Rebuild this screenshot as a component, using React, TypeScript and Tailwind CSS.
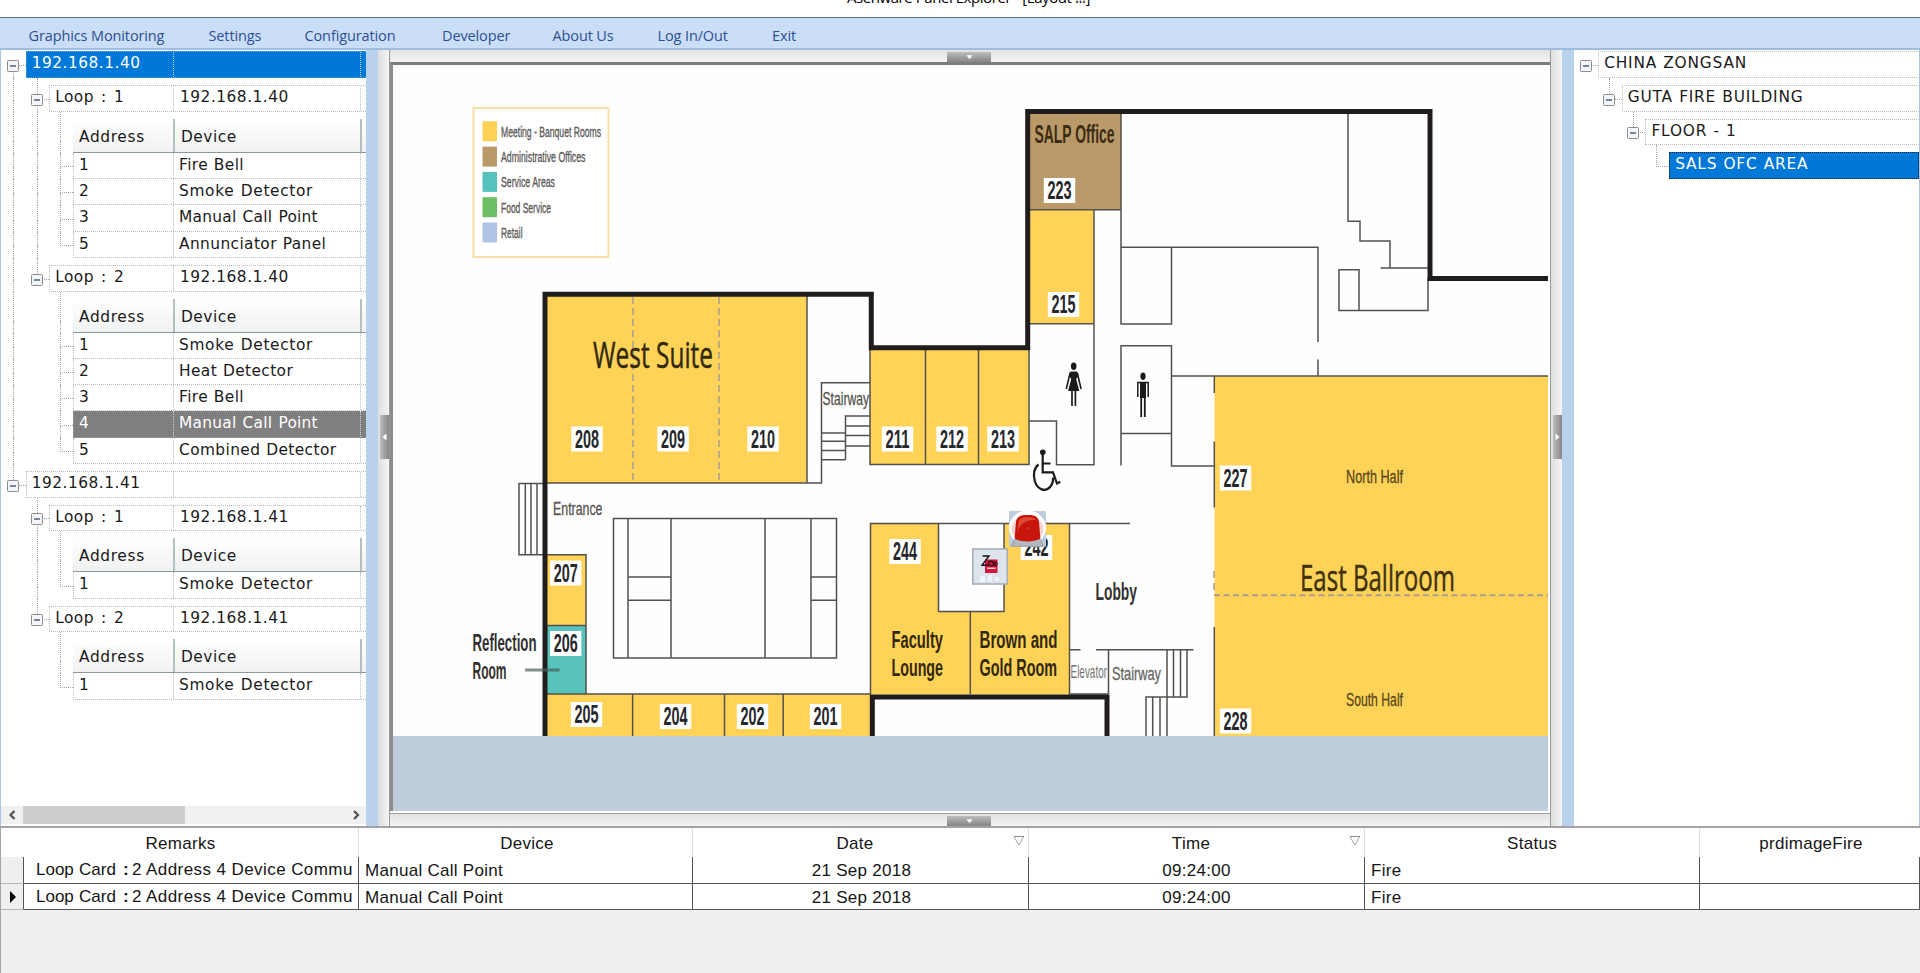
import React from "react";

type GuideKind = "none" | "line" | "tee" | "end" | "box" | "boxDown" | "boxUp" | "boxRoot";

const dot = "border-dotted border-[#a4a4a4]";

function Guide({ kind }: { kind: GuideKind }) {
  const isBox = kind.startsWith("box");
  const up = kind === "line" || kind === "tee" || kind === "end" || kind === "box" || kind === "boxUp";
  const down = kind === "line" || kind === "tee" || kind === "box" || kind === "boxDown";
  const stub = kind !== "none" && kind !== "line";
  return (
    <div className="relative flex w-[23.67px] shrink-0 flex-col self-stretch pl-[11px]">
      <div className={`${dot} flex-1 ${up ? "border-l" : ""} ${stub ? "border-b" : ""}`} />
      <div className={`${dot} h-3 ${down ? "border-l" : ""}`} />
      {isBox && (
        <svg className="absolute bottom-[6px] left-[5px]" width="12" height="12" viewBox="0 0 12 12">
          <rect x="0.5" y="0.5" width="11" height="11" rx="1" fill="#f4f5f6" stroke="#8b8d90" />
          <path d="M3 6H9" stroke="#3f5680" strokeWidth="1.4" />
        </svg>
      )}
    </div>
  );
}

const spacing: Record<string, string> = {
  "192.168.1.40": "tracking-[0.5px]",
  "192.168.1.41": "tracking-[0.5px]",
  "Loop : 1": "tracking-[0.4px] [word-spacing:2px]",
  "Loop : 2": "tracking-[0.4px] [word-spacing:2px]",
  "Smoke Detector": "tracking-[0.65px] [word-spacing:1px]",
  "Manual Call Point": "tracking-[0.25px] [word-spacing:1px]",
};

function spacingFor(text: string) {
  return spacing[text] ?? "tracking-[0.4px] [word-spacing:0.5px]";
}

type RowProps = {
  guides: GuideKind[];
  label: string;
  value?: string;
  gap?: boolean;
  item?: boolean;
  tone?: "plain" | "blue" | "gray";
};

function Row({ guides, label, value = "", gap = false, item = false, tone = "plain" }: RowProps) {
  const fill =
    tone === "blue"
      ? "bg-[#0078d7] text-white border-[#5aa0dd]"
      : tone === "gray"
        ? "bg-[#808080] text-white border-[#a0a0a0]"
        : "border-[#bdbdbd]";
  const inner = tone === "plain" ? "border-[#bdbdbd]" : "border-[#c8d4e0]";
  return (
    <div className={`flex ${gap ? "h-[33.7px]" : item ? "h-[26.3px]" : "h-[26.7px]"}`}>
      {guides.map((g, i) => (
        <Guide key={i} kind={g} />
      ))}
      <div className={`flex min-w-0 flex-1 ${gap ? "pt-[7px]" : ""}`}>
        <div
          className={`flex min-w-0 flex-1 border-b border-l border-dotted ${item ? "" : "border-t"} ${fill}`}
        >
          <div
            className={`min-w-0 flex-1 pl-[5px] ${spacingFor(label)} ${item ? "leading-[24px]" : "leading-[23px]"}`}
          >
            {label}
          </div>
          <div
            className={`w-[188px] border-x border-dotted ${inner} ${spacingFor(value)} ${item ? "pl-[5px] leading-[24px]" : "pl-[6px] leading-[23px]"}`}
          >
            {value}
          </div>
          <div className="w-[5px]" />
        </div>
      </div>
    </div>
  );
}

function Header({ guides }: { guides: GuideKind[] }) {
  return (
    <div className="flex h-[41px]">
      {guides.map((g, i) => (
        <Guide key={i} kind={g} />
      ))}
      <div className="flex min-w-0 flex-1 pt-[7px]">
        <div className="flex min-w-0 flex-1 border-b border-[#8c9a9c] bg-gradient-to-b from-white to-[#f0f1f2] leading-[36px]">
          <div className="h-[33px] min-w-0 flex-1 pl-[6px] tracking-[0.65px]">Address</div>
          <div className="h-[33px] w-[189px] border-x-2 border-[#b3bfc1] pl-[6px] tracking-[0.5px]">Device</div>
          <div className="w-[4px]" />
        </div>
      </div>
    </div>
  );
}

type Loop = { name: string; items: [string, string][] };
const panels: { ip: string; loops: Loop[] }[] = [
  {
    ip: "192.168.1.40",
    loops: [
      {
        name: "Loop : 1",
        items: [
          ["1", "Fire Bell"],
          ["2", "Smoke Detector"],
          ["3", "Manual Call Point"],
          ["5", "Annunciator Panel"],
        ],
      },
      {
        name: "Loop : 2",
        items: [
          ["1", "Smoke Detector"],
          ["2", "Heat Detector"],
          ["3", "Fire Bell"],
          ["4", "Manual Call Point"],
          ["5", "Combined Detector"],
        ],
      },
    ],
  },
  {
    ip: "192.168.1.41",
    loops: [
      { name: "Loop : 1", items: [["1", "Smoke Detector"]] },
      { name: "Loop : 2", items: [["1", "Smoke Detector"]] },
    ],
  },
];

function DeviceTree() {
  return (
    <div className="flex w-[366px] flex-col border-l border-[#a9c4e4] bg-white">
      <div className="flex-1 overflow-hidden pl-px pt-[1.3px] text-[15.4px] text-[#1a1a1a]">
        {panels.map((p, pi) => {
          const root: GuideKind = pi === 0 ? "line" : "none";
          return (
            <React.Fragment key={p.ip}>
              <Row
                guides={[pi === 0 ? "boxDown" : "boxUp"]}
                label={p.ip}
                gap={pi > 0}
                tone={pi === 0 ? "blue" : "plain"}
              />
              {p.loops.map((l, li) => {
                const side: GuideKind = li === 0 ? "line" : "none";
                return (
                  <React.Fragment key={l.name}>
                    <Row guides={[root, li === 0 ? "box" : "boxUp"]} label={l.name} value={p.ip} gap />
                    <Header guides={[root, side, "line"]} />
                    {l.items.map(([a, d], i) => (
                      <Row
                        key={a}
                        guides={[root, side, i === l.items.length - 1 ? "end" : "tee"]}
                        label={a}
                        value={d}
                        item
                        tone={a === "4" ? "gray" : "plain"}
                      />
                    ))}
                  </React.Fragment>
                );
              })}
            </React.Fragment>
          );
        })}
      </div>
      <div className="mb-[2px] flex h-[18px] items-center bg-[#f0f0f0]">
        <div className="flex w-[22px] justify-center">
          <svg width="9" height="10" viewBox="0 0 9 10" fill="none" stroke="#505050" strokeWidth="2.2">
            <path d="M6.5 1L2.5 5L6.5 9" />
          </svg>
        </div>
        <div className="h-[18px] w-[162px] bg-[#cdcdcd]" />
        <div className="flex-1" />
        <div className="flex w-[20px] justify-center">
          <svg width="9" height="10" viewBox="0 0 9 10" fill="none" stroke="#505050" strokeWidth="2.2">
            <path d="M2 1L6 5L2 9" />
          </svg>
        </div>
      </div>
    </div>
  );
}

function AreaRow({ depth, label, selected = false }: { depth: number; label: string; selected?: boolean }) {
  const blanks = Array.from({ length: depth });
  return (
    <div className={`flex ${depth === 0 ? "h-[26.7px]" : "h-[33.7px]"}`}>
      {blanks.map((_, i) => (
        <Guide key={i} kind="none" />
      ))}
      <Guide kind={selected ? "end" : depth === 0 ? "boxRoot" : "boxUp"} />
      <div className={`flex min-w-0 flex-1 ${depth === 0 ? "" : "pt-[7px]"}`}>
        <div
          className={`min-w-0 flex-1 border border-dotted pl-[5px] leading-[22px] ${selected ? "border-[#1f1f1f] bg-[#0078d7] text-white" : "border-[#bdbdbd] border-r-transparent"}`}
        >
          {label}
        </div>
      </div>
    </div>
  );
}

function AreaTree() {
  return (
    <div className="w-[346px] border-r border-[#a9c4e4] bg-white pl-[0.5px] pt-[1.3px] text-[15.4px] tracking-[0.8px] text-[#1a1a1a] [word-spacing:0.5px]">
      <AreaRow depth={0} label="CHINA ZONGSAN" />
      <AreaRow depth={1} label="GUTA FIRE BUILDING" />
      <AreaRow depth={2} label="FLOOR - 1" />
      <AreaRow depth={3} label="SALS OFC AREA" selected />
    </div>
  );
}

type LabelProps = {
  x: number;
  y: number;
  w: number;
  size: number;
  bold?: boolean;
  fill?: string;
  font?: string;
  edge?: number;
  children: string;
};

const NARROW = "'Liberation Sans Narrow', 'Liberation Sans', sans-serif";

function Label({ x, y, w, size, bold = false, fill = "#2b2722", font = NARROW, edge = 0, children }: LabelProps) {
  return (
    <text
      x={x}
      y={y}
      textLength={w}
      lengthAdjust="spacingAndGlyphs"
      fontSize={size}
      fontWeight={bold ? 700 : 400}
      fontFamily={font}
      fill={fill}
      stroke={edge ? fill : "none"}
      strokeWidth={edge}
    >
      {children}
    </text>
  );
}

const rooms: [string, number, number][] = [
  ["208", 587, 439],
  ["209", 673, 439],
  ["210", 763, 439],
  ["211", 897.5, 439],
  ["212", 952, 439],
  ["213", 1003, 439],
  ["207", 565.7, 573],
  ["206", 565.7, 643.5],
  ["205", 586.5, 714.5],
  ["204", 675.5, 716.5],
  ["202", 752.5, 716.5],
  ["201", 825.5, 716.5],
  ["244", 905, 551.5],
  ["223", 1059.5, 190.5],
  ["215", 1063.5, 304.5],
  ["227", 1235.5, 478],
  ["228", 1235.5, 721],
  ["242", 1036.5, 547.5],
];

const legend: [string, string, number][] = [
  ["Meeting - Banquet Rooms", "#fdd155", 100],
  ["Administrative Offices", "#bb9a69", 84.5],
  ["Service Areas", "#55c2bb", 54],
  ["Food Service", "#6cbf62", 50],
  ["Retail", "#aec4e7", 21.5],
];

function FloorPlan() {
  return (
    <svg className="block" width="1155" height="671" viewBox="393 65 1155 671">
      <rect x="393" y="65" width="1155" height="671" fill="#fefefe" />

      <rect x="473.5" y="108" width="135" height="149" fill="#fff" stroke="#f8dfa6" strokeWidth="2" />
      {legend.map(([t, c, w], i) => (
        <g key={t}>
          <rect x="482.5" y={121.3 + i * 25.3} width="14.5" height="20" fill={c} />
          <Label x={501} y={136.6 + i * 25.3} w={w} size={15.5} fill="#5c5956" edge={0.35}>
            {t}
          </Label>
        </g>
      ))}

      <g fill="#ffd357">
        <rect x="547" y="296" width="260" height="187" />
        <rect x="870" y="350" width="159" height="114.5" />
        <rect x="1029" y="209.5" width="65" height="114" />
        <rect x="547" y="554.5" width="39" height="71" />
        <rect x="547" y="694" width="324" height="42" />
        <rect x="870.5" y="523.5" width="199" height="171" />
        <rect x="1214.5" y="376" width="334" height="360" />
      </g>
      <rect x="1029" y="113" width="92" height="96.5" fill="#bb9a69" />
      <rect x="547" y="625.5" width="39" height="68.5" fill="#59c2bb" />
      <rect x="938.5" y="523.5" width="65.5" height="88" fill="#fefefe" />

      <g fill="none" stroke="#54514c" strokeWidth="1.5">
        <path d="M807 296V483M545 483H821.5V382.7H870" />
        <path d="M845.5 459.7V416H870M845.5 426H870M845.5 435.5H870M845.5 446H870M821.5 433H845.5M821.5 441.3H845.5M821.5 450.5H845.5M821.5 459.7H845.5" />
        <path d="M870 348V464.5H1029V324M925.5 350V464.5M978.5 350V464.5" />
        <path d="M1029 209.7H1121M1094 209.7V464.7H1056.5V421H1029M1029 323.7H1094" />
        <path d="M1121 113V324H1171.5V247.3M1121 247.3H1318V342M1318 359.5V376" />
        <path d="M1121 465.5V345.8H1171.5V466H1214M1121 433.6H1171.5M1171.5 376H1548" />
        <path d="M1214.3 376V393M1214.3 441.6V507.6M1214.3 627V736" />
        <path d="M1348 113V221.3H1360V241H1390V268M1380.5 268H1428" />
        <path d="M1359 310.4V269.7H1339V310.4H1428V278" />
        <path d="M544 483.5H519V554.7H586V694M525.3 483.5V554.7M531 483.5V554.7M537 483.5V554.7M547 625.5H586" />
        <path d="M545 694H871M632.6 694V736M724.5 694V736M783.2 694V736" />
        <path d="M613.5 518.5H836.5V658H613.5ZM628 518.5V658M671 518.5V658M765 518.5V658M811 518.5V658M628 577H671M628 600.3H671M811 577H836.5M811 600.3H836.5" />
        <path d="M870.5 694V523.5H1130M938.5 523.5V611.5H1004V523.5M970.3 611.5V694M1069.5 523.5V694H1108.5" />
        <path d="M1069.5 649.7H1080.5M1096 649.7H1193.5M1108.5 649.7V694M1167 649.7V736M1173.5 649.7V697M1180.5 649.7V697M1187 649.7V697H1146V736M1152.7 697V736M1160 697V736" />
      </g>
      <g fill="none" stroke="#aaa08e" strokeWidth="1.6">
        <path d="M633 297V483M719 297V483" strokeDasharray="7 4" />
        <path d="M1214 595.3H1548" strokeWidth="2" strokeDasharray="6 3.5" />
        <path d="M1214 571V594" strokeDasharray="7 5" />
      </g>
      <g fill="none" stroke="#211d1c" strokeWidth="5">
        <path d="M545 736V294.3H871.3V347.8H1027.7V111.5H1430V278.5H1548" />
        <path d="M872.3 736V697H1107V736" />
      </g>
      <path d="M525 670H559.5" stroke="#4a5f5d" strokeOpacity="0.7" strokeWidth="3" />

      {rooms.map(([n, x, y]) => (
        <g key={n}>
          <rect x={x - 15.7} y={y - 12.5} width="31.4" height="25" fill="#fff" />
          <Label x={x - 12} y={y + 8.8} w={24} size={25} bold fill="#26272b">
            {n}
          </Label>
        </g>
      ))}

      <Label x={593} y={368.3} w={120} size={37} font="'Open Sans', sans-serif" fill="#33280f" edge={0.5}>West Suite</Label>
      <Label x={1300} y={591} w={155} size={37} font="'Open Sans', sans-serif" fill="#40320f" edge={0.5}>East Ballroom</Label>
      <Label x={822.5} y={405.3} w={46.5} size={19} fill="#55524f" edge={0.3}>Stairway</Label>
      <Label x={553} y={515.2} w={49.5} size={19} fill="#55524f" edge={0.3}>Entrance</Label>
      <Label x={1070.5} y={678} w={36.5} size={19} fill="#77746f">Elevator</Label>
      <Label x={1112} y={680.2} w={49} size={19} fill="#66635f" edge={0.3}>Stairway</Label>
      <Label x={1346} y={483} w={57} size={19} fill="#57471d" edge={0.3}>North Half</Label>
      <Label x={1346} y={705.7} w={57} size={19} fill="#57471d" edge={0.3}>South Half</Label>
      <Label x={1034.5} y={142.7} w={80} size={25} bold fill="#3d2c14">SALP Office</Label>
      <Label x={891.5} y={648.2} w={51.5} size={24} bold fill="#33280f">Faculty</Label>
      <Label x={891.5} y={675.7} w={51.5} size={24} bold fill="#33280f">Lounge</Label>
      <Label x={979.5} y={648.2} w={78} size={24} bold fill="#33280f">Brown and</Label>
      <Label x={979.5} y={675.7} w={77.5} size={24} bold fill="#33280f">Gold Room</Label>
      <Label x={472.5} y={651} w={64} size={24} bold fill="#33312f">Reflection</Label>
      <Label x={472.5} y={678.7} w={34} size={24} bold fill="#33312f">Room</Label>
      <Label x={1095.5} y={600} w={41.5} size={24} bold fill="#33312f">Lobby</Label>

      <g fill="#1d1b1a">
        <ellipse cx="1073.7" cy="366.3" rx="2.8" ry="3.7" />
        <path d="M1070.6 371.5H1076.8L1078.3 376L1076.2 379L1079.3 391H1068.1L1071.2 379L1069.1 376Z" />
        <path d="M1070.2 372.5L1066.3 389M1077.2 372.5L1081.1 389" fill="none" stroke="#1d1b1a" strokeWidth="1.6" />
        <path d="M1072 391V406M1075.4 391V406" stroke="#1d1b1a" strokeWidth="1.7" />
        <ellipse cx="1143" cy="376.3" rx="2.6" ry="3.7" />
        <path d="M1140 382H1146V398H1140Z" />
        <path d="M1137.8 397V382.5H1148.2V397" fill="none" stroke="#1d1b1a" strokeWidth="1.5" />
        <path d="M1141.2 398V417M1144.8 398V417" stroke="#1d1b1a" strokeWidth="1.8" />
      </g>
      <g fill="none" stroke="#1d1b1a" strokeWidth="2.2">
        <circle cx="1042.8" cy="452.3" r="2.8" fill="#1d1b1a" stroke="none" />
        <path d="M1042.7 455V472.3H1053L1057 483.5L1060.3 481.7M1043 463.5H1050.5" />
        <path d="M1038.5 464.5C1033.8 468 1033 475 1034.8 481C1037.5 490 1045.5 492.5 1050.5 486.5C1052.5 484 1053.3 481 1053.2 477.5" />
      </g>

      <g>
        <rect x="1009" y="511" width="37" height="35.5" fill="#becdd9" />
        <ellipse cx="1027.5" cy="528" rx="18.5" ry="17.5" fill="#fff" />
        <ellipse cx="1027.5" cy="529" rx="16" ry="13" fill="#f9d3d0" />
        <path d="M1011.5 546.3L1014.5 539.5H1040.5L1043.5 546.3Z" fill="#b5b9bf" stroke="#8d949c" strokeWidth="0.8" />
        <path d="M1014.6 538.5L1016 522C1016.8 516.8 1020 515 1027.5 515C1035 515 1038.2 516.8 1039 522L1040.4 538.5C1034 542.5 1021 542.5 1014.6 538.5Z" fill="#c9160c" />
        <path d="M1017 533L1018.4 523C1019.2 518.4 1022 517.2 1027.5 517.2C1032 517.2 1034.8 518.2 1035.8 520C1028 519.5 1020 522 1017 533Z" fill="#e04a35" />
        <circle cx="1028" cy="528.5" r="2.6" fill="#dc2116" stroke="#9c1510" strokeWidth="0.7" />
      </g>
      <g>
        <rect x="972.8" y="549" width="34.5" height="35" fill="#dce5ec" stroke="#a8afb8" strokeWidth="1.6" />
        <rect x="985" y="559.5" width="12.5" height="13.5" fill="#d3163b" />
        <path d="M987 567.5H995.5V569H987Z" fill="#f3c9d2" />
        <path d="M980 576h5v6h-5zM988 575h4v6h-4zM995 577h4v4h-4z" fill="#f1f5f8" />
        <path d="M982.5 556H989L982 565.3H988" fill="none" stroke="#1a1217" strokeWidth="1.4" />
        <ellipse cx="991" cy="563.5" rx="2.4" ry="2.4" fill="none" stroke="#1a1217" strokeWidth="1.1" />
        <path d="M994.8 561.5V567M994.8 563.5C996 561.5 997.5 562 997.3 564C997 566 995.5 566 994.8 565" fill="none" stroke="#1a1217" strokeWidth="1" />
      </g>
    </svg>
  );
}

function CollapseBar() {
  return (
    <div className="flex h-full justify-center bg-gradient-to-b from-[#e2e2e2] to-[#f4f4f4] pr-[2px]">
      <div className="mt-[2px] flex w-[44px] items-center justify-center self-stretch bg-gradient-to-b from-[#bdbdbd] to-[#868686]">
        <svg width="7" height="5" viewBox="0 0 8 5">
          <path d="M0.5 0H7.5L4 4.5Z" fill="#fff" />
        </svg>
      </div>
    </div>
  );
}

function Splitter({ dir }: { dir: "left" | "right" }) {
  return (
    <div className="flex w-[11px] flex-col items-end bg-gradient-to-r from-[#dedede] to-[#f5f5f5] pt-[365px]">
      <div className="flex h-[44px] w-[9px] items-center justify-center bg-gradient-to-r from-[#bdbdbd] to-[#868686]">
        <svg width="5" height="8" viewBox="0 0 5 8">
          <path d={dir === "left" ? "M4.5 0.5V7.5L0.5 4Z" : "M0.5 0.5V7.5L4.5 4Z"} fill="#fff" />
        </svg>
      </div>
    </div>
  );
}

function MapPane() {
  return (
    <div className="flex w-[1162px] flex-col border-x border-[#9a9a9a]">
      <div className="h-[12px]">
        <CollapseBar />
      </div>
      <div className="flex h-[749px] border-l-[3px] border-t-[3px] border-[#7c7c7c] border-l-[#8c8c8c] bg-[#bfccda]">
        <div className="w-[1155px]">
          <FloorPlan />
        </div>
        <div className="flex-1 bg-white" />
      </div>
      <div className="border-b border-[#a0a0a0] bg-white pt-[2px]" />
      <div className="min-h-0 flex-1">
        <CollapseBar />
      </div>
    </div>
  );
}

const cols = "grid grid-cols-[23px_335px_334px_336px_336px_335px_220px] grid-rows-[minmax(0,1fr)]";
const events = [
  { current: false, remarks: ["Loop", "Card", ":", "2 Address 4 Device Commu"], device: "Manual Call Point", date: "21 Sep 2018", time: "09:24:00", status: "Fire" },
  { current: true, remarks: ["Loop", "Card", ":", "2 Address 4 Device Commu"], device: "Manual Call Point", date: "21 Sep 2018", time: "09:24:00", status: "Fire" },
];

function SortMark() {
  return (
    <svg className="absolute right-[3px] top-[8px]" width="12" height="10" viewBox="0 0 12 10">
      <path d="M1 0.5H11" fill="none" stroke="#8a8a8a" />
      <path d="M1 1L6 9L10.5 1" fill="none" stroke="#a2a2a2" />
    </svg>
  );
}

function EventGrid() {
  const head = "border-r border-[#dcdcdc] text-center";
  const cell = "border-r border-b border-[#555555] px-[6px]";
  return (
    <div className="flex flex-1 flex-col border-l border-t-2 border-[#a3a3a3] bg-[#efefef] font-['Liberation_Sans',sans-serif] text-[17px] tracking-[0.28px] text-[#151515]">
      <div className={`${cols} h-[29px] bg-white leading-[31px]`}>
        <div className="col-span-2 border-r border-[#dcdcdc] pl-[2px] text-center">Remarks</div>
        <div className={`pl-[3px] ${head}`}>Device</div>
        <div className={`relative pr-[11px] ${head}`}>
          Date
          <SortMark />
        </div>
        <div className={`relative pr-[11px] ${head}`}>
          Time
          <SortMark />
        </div>
        <div className={head}>Status</div>
        <div className="pl-[2px] text-center">prdimageFire</div>
      </div>
      {events.map((e, i) => (
        <div key={i} className={`${cols} ${i === 0 ? "h-[27px]" : "h-[26px]"} bg-white leading-[27px]`}>
          <div className="flex items-center border-b border-r border-[#555555] border-b-[#b5b5b5] bg-[#efefef] pl-[9px]">
            {e.current && (
              <svg width="6" height="12" viewBox="0 0 6 12">
                <path d="M0 0L6 6L0 12Z" fill="#000" />
              </svg>
            )}
          </div>
          <div className="flex overflow-hidden whitespace-pre border-b border-r border-[#555555] pl-[12px] leading-[25px]">
            <span className="w-[43px] tracking-[0px]">{e.remarks[0]}</span>
            <span className="w-[44px] tracking-[0px]">{e.remarks[1]}</span>
            <span className="w-[9px] font-bold">{e.remarks[2]}</span>
            <span className="tracking-[0.42px]">{e.remarks[3]}</span>
          </div>
          <div className={cell}>{e.device}</div>
          <div className={`pl-[8px] text-center ${cell}`}>{e.date}</div>
          <div className={`text-center ${cell}`}>{e.time}</div>
          <div className={cell}>{e.status}</div>
          <div className={cell} />
        </div>
      ))}
    </div>
  );
}

export default function App() {
  return (
    <div className="flex h-[973px] w-[1920px] flex-col overflow-hidden whitespace-nowrap bg-white font-['DejaVu_Sans',sans-serif]">
      <div className="h-[17px] shrink-0 overflow-hidden bg-white font-['Open_Sans',sans-serif] text-[15px] text-black">
        <div className="-mt-[13px] flex h-[20px] pl-[847px] leading-[20px] tracking-[-0.44px]">
          Asenware Panel Explorer - [Layout !!!]
        </div>
      </div>
      <nav className="flex h-[33px] shrink-0 border-b-2 border-t border-b-[#9fbddd] border-t-[#5f6f83] bg-[#cadef7] pl-[28.5px] font-['Open_Sans',sans-serif] text-[14.5px] leading-[35px] tracking-[-0.12px] text-[#2d4f94]">
        <span className="w-[180px]">Graphics Monitoring</span>
        <span className="w-[96px]">Settings</span>
        <span className="w-[137.5px]">Configuration</span>
        <span className="w-[110.5px]">Developer</span>
        <span className="w-[105px]">About Us</span>
        <span className="w-[114.5px]">Log In/Out</span>
        <span>Exit</span>
      </nav>
      <main className="flex h-[776px] shrink-0">
        <DeviceTree />
        <div className="w-[12px] bg-[#b9d1ec]" />
        <Splitter dir="left" />
        <MapPane />
        <Splitter dir="right" />
        <div className="w-[12px] bg-[#b9d1ec]" />
        <AreaTree />
      </main>
      <EventGrid />
    </div>
  );
}
